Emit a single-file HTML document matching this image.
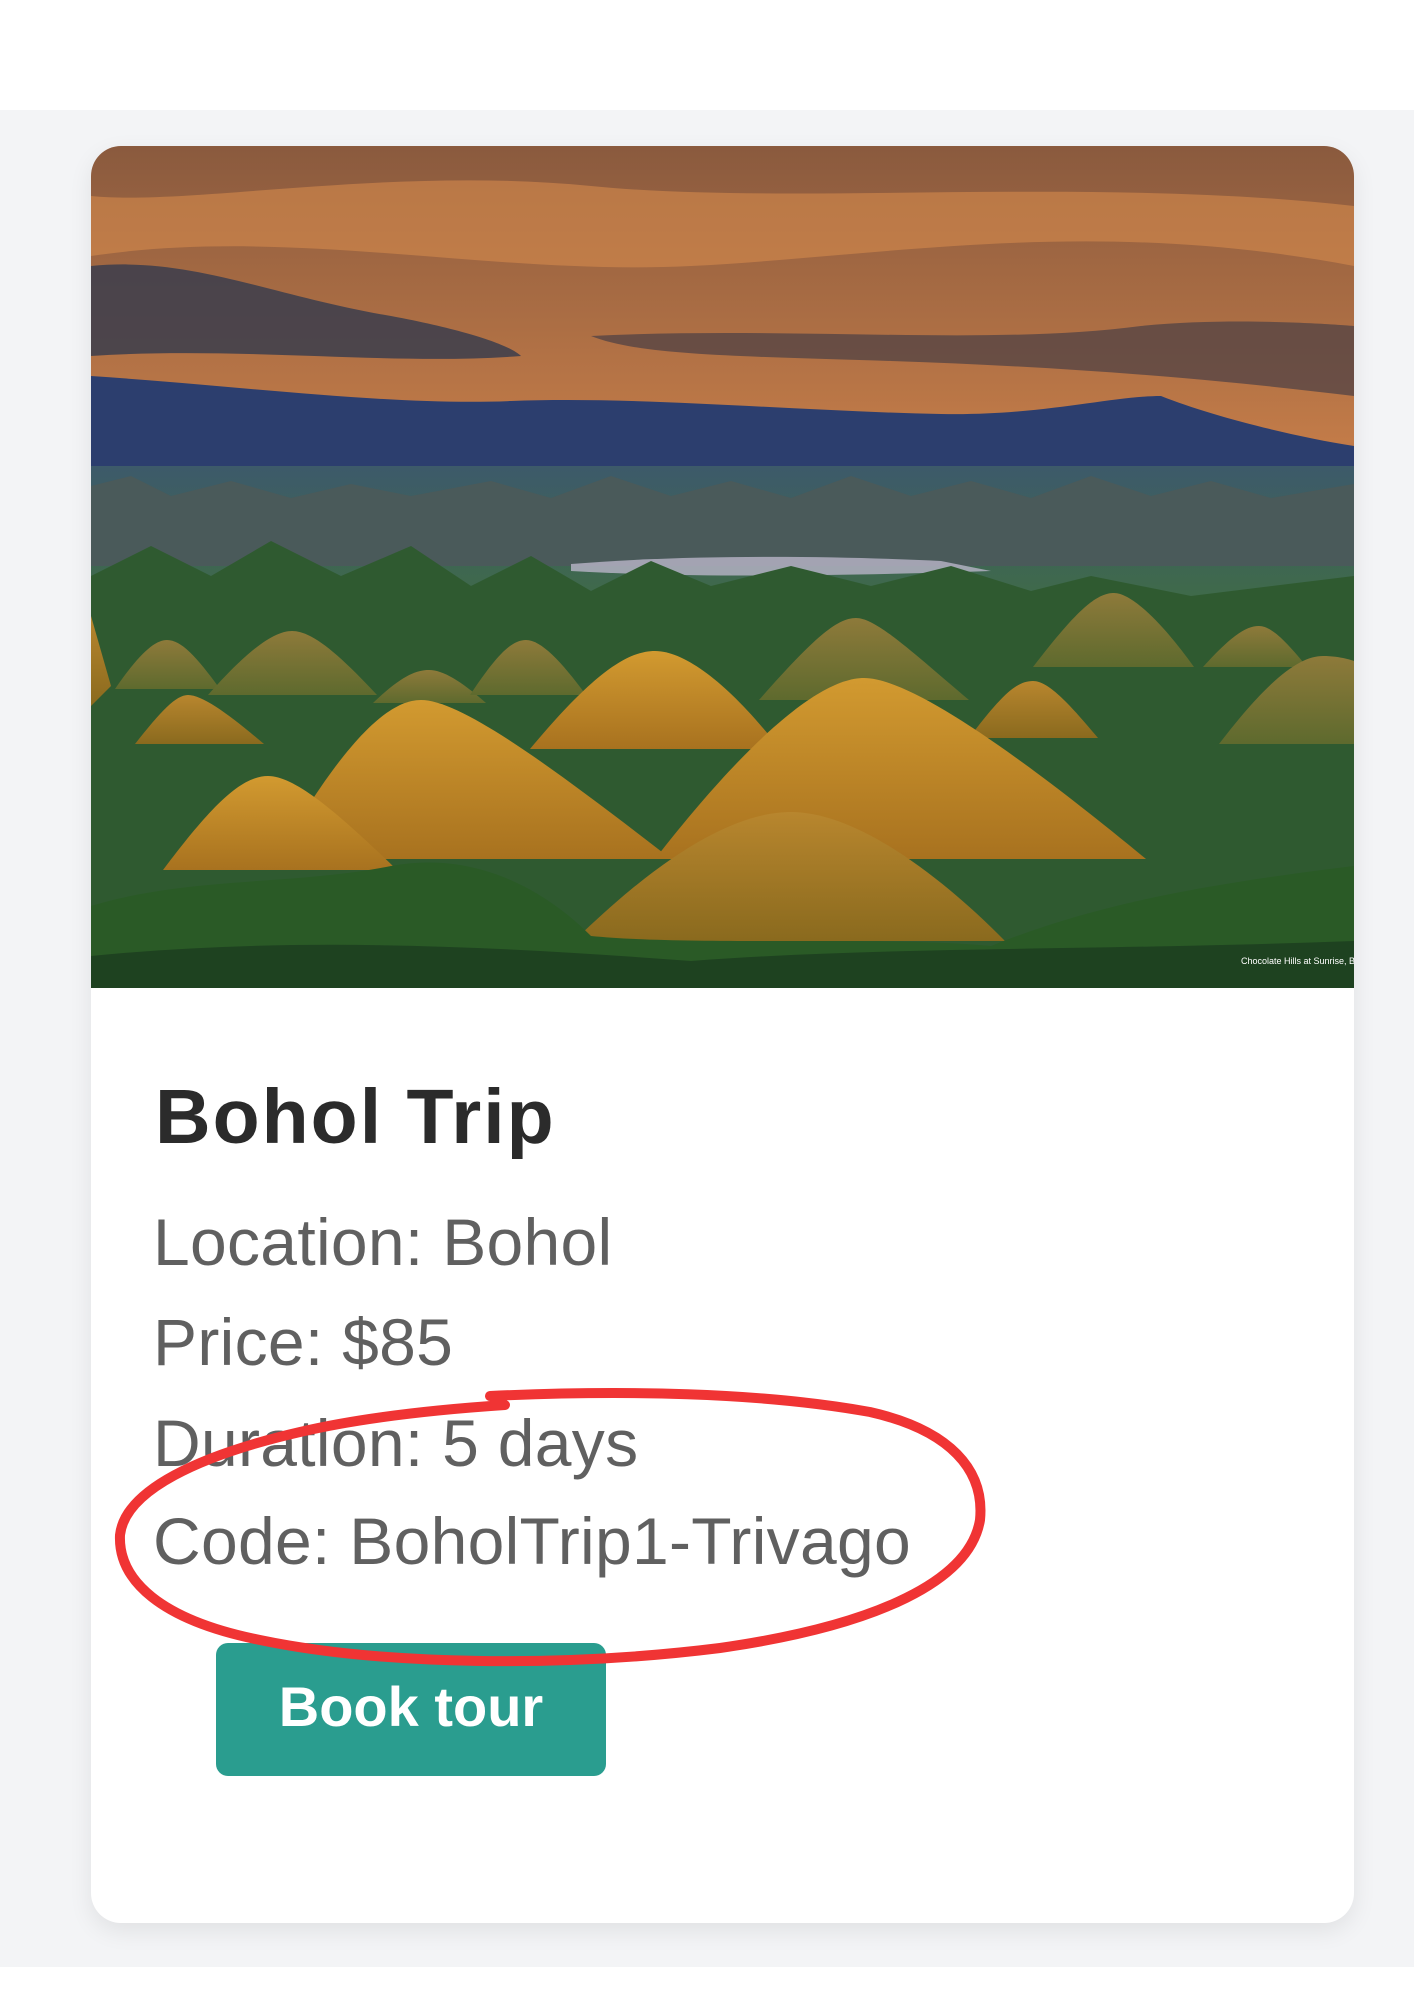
<!DOCTYPE html>
<html><head><meta charset="utf-8"><style>
html,body{margin:0;padding:0}
body{width:1414px;height:2000px;background:#fff;position:relative;overflow:hidden;font-family:"Liberation Sans",Arial,sans-serif}
.bg{position:absolute;left:0;top:110px;width:1414px;height:1857px;background:#f3f4f6}
.card{position:absolute;left:91px;top:146px;width:1263px;height:1777px;background:#fff;border-radius:30px;overflow:hidden;box-shadow:0 8px 24px rgba(0,0,0,0.08)}
.img{position:absolute;left:0;top:0;width:1263px;height:842px}
h1{position:absolute;left:64px;top:933px;margin:0;font-size:77px;font-weight:bold;color:#2b2b2b;line-height:1;letter-spacing:2px}
.p{position:absolute;left:62px;margin:0;font-size:66px;color:#606060;line-height:1;letter-spacing:0.3px}
.btn{position:absolute;left:125px;top:1497px;width:390px;height:133px;background:#2a9d8f;border-radius:12px;color:#fff;font-weight:bold;font-size:56px;text-align:center;line-height:128px}
svg.ov{position:absolute;left:0;top:0}
</style></head><body>
<div class="bg"></div>
<div class="card">
<svg class="img" viewBox="0 0 1263 842" preserveAspectRatio="none">
<defs>
<linearGradient id="sky" x1="0" y1="0" x2="0" y2="1">
<stop offset="0" stop-color="#8a5a3e"/><stop offset="0.35" stop-color="#c27b48"/><stop offset="0.6" stop-color="#6b5a58"/><stop offset="0.8" stop-color="#3a4560"/><stop offset="1" stop-color="#2d4680"/>
</linearGradient>
<linearGradient id="grn" x1="0" y1="0" x2="0" y2="1">
<stop offset="0" stop-color="#3d5a6a"/><stop offset="0.25" stop-color="#3f6a4a"/><stop offset="1" stop-color="#1f4a22"/>
</linearGradient>
<linearGradient id="hill" x1="0" y1="0" x2="0" y2="1">
<stop offset="0" stop-color="#b8862e"/><stop offset="1" stop-color="#8a6a1e"/>
</linearGradient>
<linearGradient id="hillb" x1="0" y1="0" x2="0" y2="1">
<stop offset="0" stop-color="#d29a30"/><stop offset="1" stop-color="#a8721f"/>
</linearGradient>
<linearGradient id="hillf" x1="0" y1="0" x2="0" y2="1">
<stop offset="0" stop-color="#8e7a3a"/><stop offset="1" stop-color="#5e6a2e"/>
</linearGradient>
</defs>
<rect width="1263" height="842" fill="url(#sky)"/>
<path d="M0 110 C200 80 400 130 600 120 C800 110 1000 70 1263 120 L1263 60 C1000 30 700 60 500 40 C300 20 100 60 0 50Z" fill="#d58a4c" opacity="0.6"/>
<path d="M0 120 C100 110 180 150 300 170 C380 185 420 200 430 210 C300 220 150 200 0 210Z" fill="#3b3d4c" opacity="0.85"/>
<path d="M500 190 C700 180 900 200 1050 180 C1150 170 1263 180 1263 180 L1263 250 C1100 230 950 220 800 215 C650 210 550 210 500 190Z" fill="#4a3f45" opacity="0.7"/>
<path d="M0 230 C150 240 300 260 420 255 C550 250 700 265 850 268 C950 270 1020 250 1070 250 C1120 270 1200 290 1263 300 L1263 345 L0 345Z" fill="#2c3e6e"/>
<rect x="0" y="320" width="1263" height="522" fill="url(#grn)"/>
<path d="M0 340 L40 330 L80 350 L140 335 L200 352 L260 338 L320 350 L400 335 L460 352 L520 330 L580 350 L640 335 L700 352 L760 330 L820 350 L880 335 L940 352 L1000 330 L1060 350 L1120 335 L1180 352 L1263 338 L1263 420 L0 420Z" fill="#4a5a5a"/>
<path d="M480 418 C600 408 750 410 850 415 L900 425 C750 430 600 432 480 425Z" fill="#b9b5c8" opacity="0.8"/>
<path d="M0 430 L60 400 L120 430 L180 395 L250 430 L320 400 L380 440 L440 410 L500 445 L560 415 L620 440 L700 420 L780 440 L860 420 L940 445 L1000 430 L1100 450 L1263 430 L1263 842 L0 842Z" fill="#2f5a30"/>
<path d="M24 543 C50 505 65 494 76 494 C90 494 105 510 129 543Z" fill="url(#hillf)"/>
<path d="M117 549 C160 500 185 485 201 485 C220 485 245 505 286 549Z" fill="url(#hillf)"/>
<path d="M282 557 C310 530 325 524 338 524 C352 524 370 535 395 557Z" fill="url(#hillf)"/>
<path d="M379 549 C405 510 420 494 435 494 C450 494 470 515 495 549Z" fill="url(#hillf)"/>
<path d="M668 554 C720 495 745 472 765 472 C785 472 820 505 878 554Z" fill="url(#hillf)"/>
<path d="M942 521 C985 465 1005 447 1023 447 C1040 447 1070 475 1103 521Z" fill="url(#hillf)"/>
<path d="M1112 521 C1140 490 1155 480 1168 480 C1180 480 1195 495 1216 521Z" fill="url(#hillf)"/>
<path d="M1128 598 C1180 530 1210 510 1232 510 C1250 510 1263 515 1263 515 L1263 598Z" fill="url(#hillf)"/>
<path d="M878 592 C910 550 925 535 942 535 C958 535 980 560 1007 592Z" fill="url(#hill)"/>
<path d="M44 598 C70 565 85 549 97 549 C112 549 140 570 173 598Z" fill="url(#hill)"/>
<path d="M0 470 L20 540 L0 560Z" fill="url(#hill)"/>
<path d="M439 603 C500 530 535 505 564 505 C595 505 640 540 689 603Z" fill="url(#hillb)"/>
<path d="M185 713 C250 600 295 554 330 554 C370 554 460 620 580 713Z" fill="url(#hillb)"/>
<path d="M564 713 C660 590 730 532 773 532 C820 532 930 610 1055 713Z" fill="url(#hillb)"/>
<path d="M72 724 C120 660 150 630 177 630 C205 630 250 670 306 724Z" fill="url(#hillb)"/>
<path d="M483 795 C580 700 650 666 700 666 C760 666 840 720 914 795Z" fill="url(#hill)"/>
<path d="M0 760 C100 730 200 740 300 720 C380 705 450 740 500 790 C600 800 800 790 900 800 C1000 760 1100 740 1263 720 L1263 842 L0 842Z" fill="#2a5a26"/>
<path d="M0 810 C200 790 400 800 600 815 C800 800 1000 805 1263 795 L1263 842 L0 842Z" fill="#1e4220"/>
<text x="1150" y="818" font-size="9" fill="#fff" font-family="Liberation Sans, sans-serif">Chocolate Hills at Sunrise, Bohol</text>
</svg>
<h1>Bohol Trip</h1>
<p class="p" style="top:1063px">Location: Bohol</p>
<p class="p" style="top:1163px">Price: $85</p>
<p class="p" style="top:1264px">Duration: 5 days</p>
<p class="p" style="top:1362px">Code: BoholTrip1-Trivago</p>
<div class="btn">Book tour</div>
</div>
<svg class="ov" width="1414" height="2000" viewBox="0 0 1414 2000">
<path d="M490 1396 C620 1390 760 1392 870 1412 C950 1430 985 1470 980 1520 C970 1580 880 1625 720 1648 C560 1668 380 1665 260 1640 C160 1620 118 1580 120 1535 C125 1490 200 1455 300 1432 C360 1418 430 1410 505 1405" fill="none" stroke="#f03434" stroke-width="10" stroke-linecap="round"/>
</svg>
</body></html>
